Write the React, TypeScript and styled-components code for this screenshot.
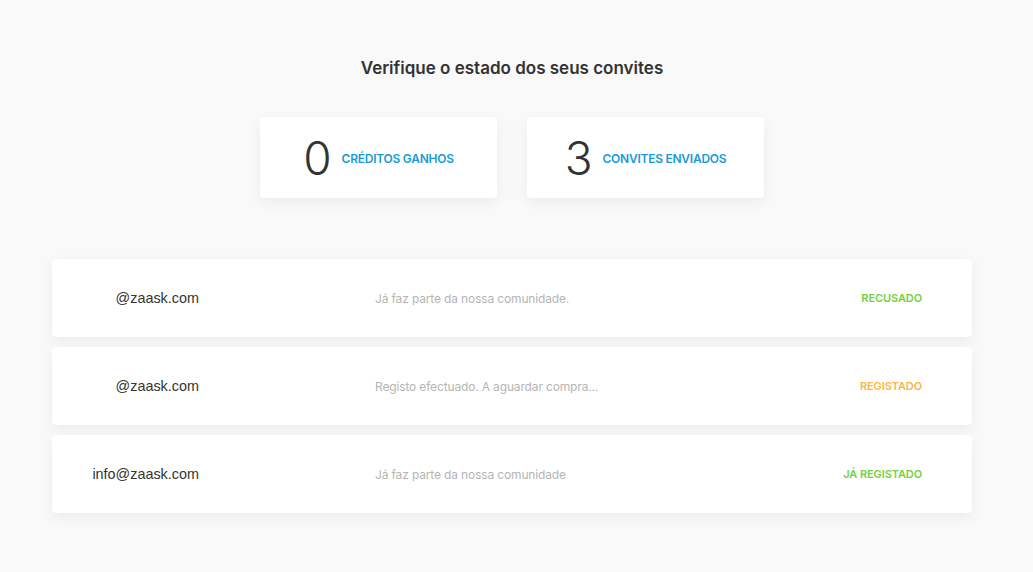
import React from 'react'
import styled, { createGlobalStyle } from 'styled-components'

const GlobalStyle = createGlobalStyle`
    html, body {
        margin: 0;
        padding: 0;
        background: #f9f9f9;
    }
    body {
        font-family: Inter, "Liberation Sans", sans-serif;
        color: #333;
    }
`

const Page = styled.div`
    width: 1024px;
    min-height: 572px;
    padding: 58px 0 40px;
    box-sizing: border-box;
    display: flex;
    flex-direction: column;
    align-items: center;
`

const Title = styled.h2`
    margin: 0;
    font-size: 17px;
    font-weight: 600;
    line-height: 20px;
    color: #333;
`

const Stats = styled.div`
    display: flex;
    gap: 30px;
    margin-top: 39px;
`

const StatCard = styled.div`
    width: 237px;
    height: 81px;
    background: #fff;
    border-radius: 4px;
    box-shadow: 0 4px 14px rgba(0, 0, 0, 0.06);
    display: flex;
    align-items: center;
    justify-content: center;
    gap: 10px;
`

const StatNumber = styled.span`
    font-size: 46px;
    font-weight: 300;
    line-height: 1;
    color: #333;
`

const StatLabel = styled.span`
    font-size: 12px;
    font-weight: 600;
    color: #1a9ad6;
    text-transform: uppercase;
    letter-spacing: -0.25px;
    margin-top: 2px;
`

const List = styled.div`
    width: 920px;
    margin-top: 61px;
    display: flex;
    flex-direction: column;
    gap: 10px;
`

const Row = styled.div`
    height: 78px;
    background: #fff;
    border-radius: 4px;
    box-shadow: 0 4px 14px rgba(0, 0, 0, 0.06);
    display: grid;
    grid-template-columns: 147px 176px 1fr auto;
    align-items: center;
    padding-right: 50px;
`

const Email = styled.span`
    font-family: "Liberation Sans", Arial, sans-serif;
    font-size: 14.4px;
    color: #333;
    text-align: right;
`

const Note = styled.span`
    grid-column: 3;
    font-size: 12px;
    letter-spacing: -0.15px;
    color: #b5b5b5;
`

const Status = styled.span<{ $color: string }>`
    font-size: 11px;
    font-weight: 600;
    color: ${p => p.$color};
    text-transform: uppercase;
    text-align: right;
    letter-spacing: -0.1px;
`

const invites = [
    { email: '@zaask.com', note: 'Já faz parte da nossa comunidade.', status: 'Recusado', color: '#74d13f' },
    { email: '@zaask.com', note: 'Registo efectuado. A aguardar compra...', status: 'Registado', color: '#fcb547' },
    { email: 'info@zaask.com', note: 'Já faz parte da nossa comunidade', status: 'Já registado', color: '#74d13f' },
]

const App = () => {
    return (
        <>
            <GlobalStyle />
            <Page>
                <Title>Verifique o estado dos seus convites</Title>
                <Stats>
                    <StatCard>
                        <StatNumber>0</StatNumber>
                        <StatLabel>Créditos ganhos</StatLabel>
                    </StatCard>
                    <StatCard>
                        <StatNumber>3</StatNumber>
                        <StatLabel>Convites enviados</StatLabel>
                    </StatCard>
                </Stats>
                <List>
                    {invites.map((x, i) => (
                        <Row key={i}>
                            <Email>{x.email}</Email>
                            <Note>{x.note}</Note>
                            <Status $color={x.color}>{x.status}</Status>
                        </Row>
                    ))}
                </List>
            </Page>
        </>
    )
}

export default App
